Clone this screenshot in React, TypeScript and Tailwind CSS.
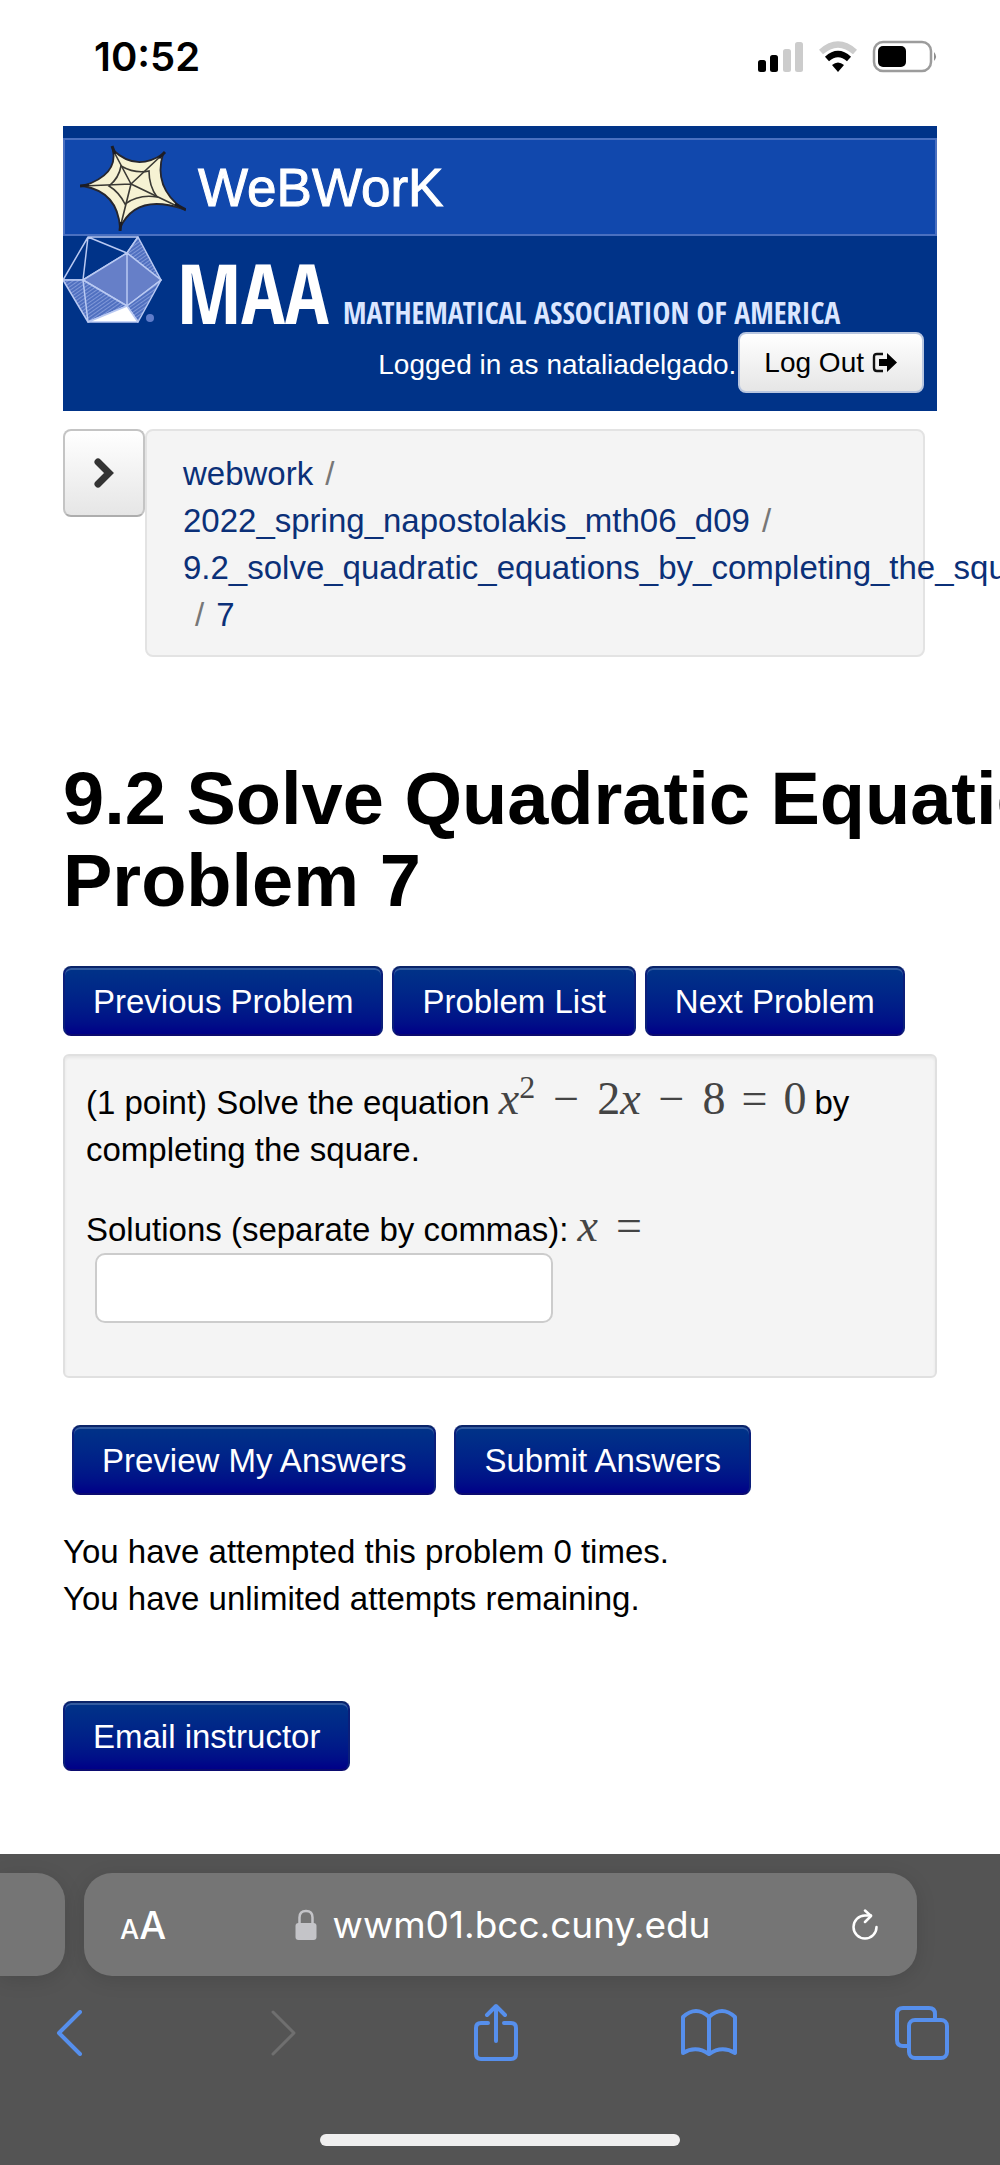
import type { ReactNode } from 'react'

const PRIMARY_BUTTON =
  'rounded-lg border-2 border-t-[#0a2469] border-x-[#0b1f7a] border-b-[#0b0b70] bg-linear-to-b from-[#003388] to-[#000088] px-7 pt-[11px] pb-[9px] text-[33px] leading-[46px] whitespace-nowrap text-white shadow-[inset_0_2px_0_rgba(255,255,255,0.2)]'

function PrimaryButton({ children }: { children: ReactNode }) {
  return (
    <button type="button" className={PRIMARY_BUTTON}>
      {children}
    </button>
  )
}

function StatusBar() {
  return (
    <div className="flex h-[126px] items-start justify-between pt-9 pr-[62px] pl-[94px]">
      <span className="font-['Inter',sans-serif] text-[40px] leading-[42px] font-semibold text-black">10:52</span>
      <div className="flex items-center gap-[14px] pt-1">
        <svg width="47" height="34" viewBox="0 0 47 34" aria-hidden="true">
          <rect x="1" y="20" width="8" height="12" rx="2.5" fill="#000" />
          <rect x="13" y="15" width="8" height="17" rx="2.5" fill="#000" />
          <rect x="26" y="9" width="8" height="23" rx="2.5" fill="#ccc" />
          <rect x="38" y="2" width="8" height="30" rx="2.5" fill="#ccc" />
        </svg>
        <svg width="40" height="34" viewBox="0 0 40 34" aria-hidden="true">
          <path d="M3 12 Q20 -3 37 12" fill="none" stroke="#ccc" strokeWidth="6" />
          <path d="M9 19 Q20 9 31 19" fill="none" stroke="#000" strokeWidth="6" />
          <path d="M14 25 Q20 20 26 25 L20 32 Z" fill="#000" />
        </svg>
        <svg width="66" height="34" viewBox="0 0 66 34" aria-hidden="true">
          <rect x="2" y="2" width="57" height="29" rx="9" fill="none" stroke="#9c9c9c" strokeWidth="2.5" />
          <rect x="6" y="6" width="28" height="21" rx="5" fill="#000" />
          <path d="M62 12 Q66 16.5 62 21 Z" fill="#8c8c8c" />
        </svg>
      </div>
    </div>
  )
}

// Spider web mark next to the product name
function WebLogo() {
  return (
    <svg width="106" height="88" viewBox="0 0 106 88" aria-hidden="true">
      <path
        d="M3 43 Q38 32 33 7 Q56 29 83 11 Q73 44 103 66 Q56 50 40 85 Q38 49 3 43 Z"
        fill="#f6f2d3"
        stroke="#26262e"
        strokeWidth="1.8"
      />
      <g fill="none" stroke="#3a3934" strokeWidth="1.6">
        <path d="M51 41 L3 43 M51 41 L33 7 M51 41 L83 11 M51 41 L103 66 M51 41 L40 85" />
        <path d="M29 43 Q39 35 41 23 Q55 31 69 28 Q69 43 77 54 Q59 51 45 61 Q39 49 29 43 Z" />
      </g>
      <path d="M32 3 L35 11 M85 9 L79 15 M106 67 L95 61 M40 88 L41 79 M0 43 L9 42" stroke="#1c1c24" strokeWidth="3" />
    </svg>
  )
}

function Icosahedron() {
  return (
    <svg width="100" height="88" viewBox="0 0 100 88" className="shrink-0" aria-hidden="true">
      <defs>
        <pattern id="hatch" width="3" height="3" patternUnits="userSpaceOnUse" patternTransform="rotate(-35)">
          <rect width="3" height="3" fill="#5070c0" />
          <rect width="3" height="1" fill="#8098d8" />
        </pattern>
      </defs>
      <g stroke="#b9c9f2" strokeWidth="1.5" strokeLinejoin="round">
        <path d="M25 1 L75 1 L64 17 Z M25 1 L0 44 L20 44 Z M25 1 L64 17 L20 44 Z" fill="none" />
        <path d="M75 1 L98 44 L64 17 Z" fill="url(#hatch)" />
        <path d="M20 44 L64 17 L64 70 Z M64 17 L98 44 L64 70 Z" fill="#667fc8" />
        <path d="M0 44 L20 44 L25 86 Z M20 44 L64 70 L25 86 Z M64 70 L98 44 L75 86 Z" fill="url(#hatch)" />
        <path d="M25 86 L64 70 L75 86 Z" fill="#fff" />
      </g>
      <circle cx="87" cy="82" r="4" fill="#5f7cca" />
    </svg>
  )
}

function LogOutIcon() {
  return (
    <svg width="26" height="22" viewBox="0 0 26 22" aria-hidden="true">
      <path d="M11 2 H5 Q2 2 2 5 V16 Q2 19 5 19 H11" fill="none" stroke="#111" strokeWidth="2.4" />
      <path d="M7 7 H15 V1 L25 10.5 L15 20 V14 H7 Z" fill="#000" />
    </svg>
  )
}

function Masthead() {
  return (
    <header className="bg-[#003388] pt-3 pb-[18px]">
      <div className="flex h-[98px] items-center gap-3 border-2 border-[#4a70c0] bg-[#1148ad] pl-[15px]">
        <WebLogo />
        <span className="text-[53px] leading-none text-white [-webkit-text-stroke:1px_#fff]">WeBWorK</span>
      </div>
      <div className="flex h-[90px] items-baseline font-['Liberation_Sans_Narrow','Open_Sans_Condensed','Liberation_Sans',sans-serif] font-bold text-white">
        <Icosahedron />
        <span className="pl-[14px] text-[82px] leading-none">MAA</span>
        <span className="pl-[14px] text-[30px] leading-none whitespace-nowrap text-[#dbe6ff]">
          MATHEMATICAL ASSOCIATION OF AMERICA
        </span>
      </div>
      <div className="mt-[6px] flex items-center justify-end gap-[2px] pr-[13px]">
        <span className="pt-1 text-[28px] leading-[46px] text-white">Logged in as nataliadelgado.</span>
        <button
          type="button"
          className="flex h-[61px] items-center gap-2 rounded-lg border-2 border-[#b8c6e0] bg-linear-to-b from-white to-[#e6e6e6] px-6 text-[28px] text-black"
        >
          Log Out
          <LogOutIcon />
        </button>
      </div>
    </header>
  )
}

function Slash() {
  return <span className="px-3 text-[#777]">/</span>
}

function Breadcrumbs() {
  return (
    <div className="mt-[18px] flex items-start pr-3">
      <button
        type="button"
        aria-label="Open navigation"
        className="flex h-[88px] w-[82px] shrink-0 items-center justify-center rounded-lg border-2 border-[#c4c4c4] border-b-[#adadad] bg-linear-to-b from-white to-[#e6e6e6]"
      >
        <svg width="22" height="32" viewBox="0 0 22 32" aria-hidden="true">
          <path d="M5 5 L16 16 L5 27" fill="none" stroke="#333" strokeWidth="7" strokeLinecap="round" />
        </svg>
      </button>
      <nav className="min-w-0 flex-1 rounded-lg border-2 border-[#e3e3e3] bg-[#f4f4f4] pt-[19px] pr-9 pb-[17px] pl-9 text-[33px] leading-[47px] whitespace-nowrap text-[#0b3078]">
        <div>
          <a href="#webwork">webwork</a>
          <Slash />
        </div>
        <div>
          <a href="#course">2022_spring_napostolakis_mth06_d09</a>
          <Slash />
        </div>
        <div>
          <a href="#set">9.2_solve_quadratic_equations_by_completing_the_square</a>
        </div>
        <div>
          <Slash />
          <a href="#problem">7</a>
        </div>
      </nav>
    </div>
  )
}

function MathText({ children }: { children: ReactNode }) {
  return <span className="font-['Liberation_Serif',serif] text-[46px] leading-[0] text-[#444]">{children}</span>
}

function Problem() {
  return (
    <section className="mt-[18px] rounded-md border-2 border-[#e0e0e0] bg-[#f4f4f4] px-[21px] pt-[23px] pb-[53px] text-[33px] leading-[47px] text-black shadow-[inset_0_2px_3px_rgba(0,0,0,0.06)]">
      <p>
        (1 point) Solve the equation{' '}
        <MathText>
          <i>x</i>
          <sup className="text-[32px]">2</sup>
          <span className="px-[18px]">−</span>2<i>x</i>
          <span className="px-[18px]">−</span>8<span className="px-4">=</span>0
        </MathText>
        <span className="pl-2">by</span>
        <br />
        completing the square.
      </p>
      <label htmlFor="answer" className="mt-[33px] block">
        Solutions (separate by commas):{' '}
        <MathText>
          <i>x</i>
          <span className="pl-[18px]">=</span>
        </MathText>
      </label>
      <input
        id="answer"
        type="text"
        className="ml-[9px] block h-[70px] w-[458px] rounded-[10px] border-2 border-[#ccc] bg-white px-3"
      />
    </section>
  )
}

function BrowserBar() {
  return (
    <footer className="bg-[#545454] pt-[19px] pb-[19px]">
      <div className="flex h-[103px] gap-[19px]">
        <div className="w-[65px] shrink-0 rounded-r-[28px] bg-[#757575] shadow-[0_4px_20px_rgba(0,0,0,0.12)]" />
        <div className="mr-[83px] flex flex-1 items-center justify-between rounded-[28px] bg-[#757575] pr-[38px] pl-9 font-['Inter',sans-serif] text-white shadow-[0_4px_20px_rgba(0,0,0,0.12)]">
          <button type="button" aria-label="Page settings" className="flex items-baseline leading-none font-medium">
            <span className="text-[27px]">A</span>
            <span className="text-[38px]">A</span>
          </button>
          <div className="mr-3 flex items-center gap-4">
            <svg width="22" height="32" viewBox="0 0 22 32" aria-hidden="true">
              <path d="M4.5 15 V8.5 Q4.5 2 11 2 Q17.5 2 17.5 8.5 V15" fill="none" stroke="#c4c4c8" strokeWidth="2.5" />
              <rect x="0.5" y="14" width="21" height="17" rx="3" fill="#c4c4c8" />
            </svg>
            <span className="text-[37px] leading-none">wwm01.bcc.cuny.edu</span>
          </div>
          <button type="button" aria-label="Reload">
            <svg width="28" height="32" viewBox="0 0 28 32" fill="none" stroke="#fff" strokeWidth="2.5" strokeLinecap="round" strokeLinejoin="round">
              <path d="M25.5 18 A11.500 11.500 0 1 1 14 6.500 H20" />
              <path d="M14 1.500 L20 7 L14 13" />
            </svg>
          </button>
        </div>
      </div>
      <nav className="mt-[26px] -mr-7 -ml-9 grid h-[62px] grid-cols-5 items-center justify-items-center text-[#568fec]">
        <button type="button" aria-label="Back">
          <svg width="28" height="46" viewBox="0 0 28 46" fill="none" stroke="currentColor" strokeWidth="4" strokeLinecap="round" strokeLinejoin="round">
            <path d="M24 2 L3 23 L24 44" />
          </svg>
        </button>
        <button type="button" aria-label="Forward" className="text-[#6f6f6f]">
          <svg width="28" height="46" viewBox="0 0 28 46" fill="none" stroke="currentColor" strokeWidth="3" strokeLinecap="round" strokeLinejoin="round">
            <path d="M4 2 L25 23 L4 44" />
          </svg>
        </button>
        <button type="button" aria-label="Share">
          <svg width="46" height="60" viewBox="0 0 46 60" fill="none" stroke="currentColor" strokeWidth="4" strokeLinecap="round" strokeLinejoin="round">
            <path d="M15 20 H8 Q3 20 3 25 V51 Q3 56 8 56 H38 Q43 56 43 51 V25 Q43 20 38 20 H31" />
            <path d="M23 38 V4 M14 12 L23 3 L32 12" />
          </svg>
        </button>
        <button type="button" aria-label="Bookmarks">
          <svg width="58" height="50" viewBox="0 0 58 50" fill="none" stroke="currentColor" strokeWidth="4" strokeLinecap="round" strokeLinejoin="round">
            <path d="M29 9 Q16 -3 3 9 V45 Q16 37 29 46 Q42 37 55 45 V9 Q42 -3 29 9 Z M29 9 V46" />
          </svg>
        </button>
        <button type="button" aria-label="Tabs">
          <svg width="54" height="54" viewBox="0 0 54 54" fill="none" stroke="currentColor" strokeWidth="4" strokeLinejoin="round">
            <rect x="14" y="14" width="38" height="38" rx="6" />
            <path d="M14 40 H8 Q2 40 2 34 V8 Q2 2 8 2 H34 Q40 2 40 8 V14" />
          </svg>
        </button>
      </nav>
      <div className="mx-auto mt-[70px] h-3 w-[36%] rounded-full bg-[#f0efef]" />
    </footer>
  )
}

export default function App() {
  return (
    <div className="flex min-h-screen flex-col overflow-hidden bg-white font-['Liberation_Sans',sans-serif]">
      <StatusBar />
      <main className="flex-1 px-[63px] pb-[83px]">
        <Masthead />
        <Breadcrumbs />
        <h1 className="mt-[101px] text-[74px] leading-[82px] font-bold whitespace-nowrap text-black">
          9.2 Solve Quadratic Equations
          <br />
          Problem 7
        </h1>
        <div className="mt-[44px] flex gap-[9px]">
          <PrimaryButton>Previous Problem</PrimaryButton>
          <PrimaryButton>Problem List</PrimaryButton>
          <PrimaryButton>Next Problem</PrimaryButton>
        </div>
        <Problem />
        <div className="mt-[47px] ml-[9px] flex gap-[18px]">
          <PrimaryButton>Preview My Answers</PrimaryButton>
          <PrimaryButton>Submit Answers</PrimaryButton>
        </div>
        <p className="mt-[33px] text-[33px] leading-[47px] text-black">
          You have attempted this problem 0 times.
          <br />
          You have unlimited attempts remaining.
        </p>
        <div className="mt-[79px] flex">
          <PrimaryButton>Email instructor</PrimaryButton>
        </div>
      </main>
      <BrowserBar />
    </div>
  )
}
